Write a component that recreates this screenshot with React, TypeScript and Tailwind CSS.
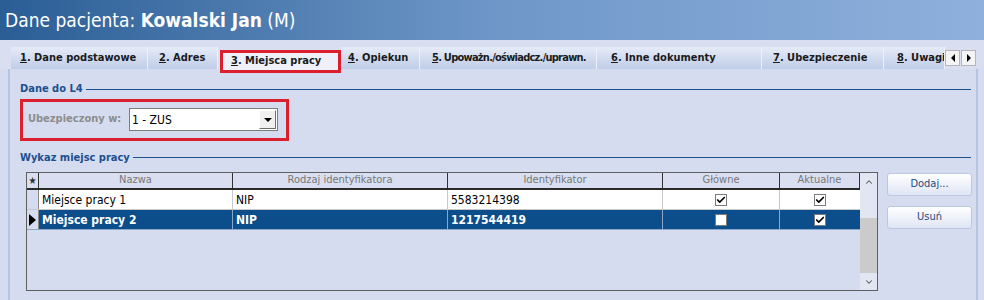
import { Check, ChevronUp, ChevronDown } from "lucide-react";

const tabs = [
  { n: "1", t: ". Dane podstawowe", cls: "w-[137px] pl-[9px]" },
  { n: "2", t: ". Adres", cls: "w-[70px] pl-[11px]" },
];
const tabsRight = [
  { n: "4", t: ". Opiekun", cls: "w-[79px] pl-[7px]" },
  { n: "5", t: ". Upoważn./oświadcz./uprawn.", cls: "w-[177px] pl-[12px] tracking-[-0.75px]" },
  { n: "6", t: ". Inne dokumenty", cls: "w-[165px] pl-[14px]" },
  { n: "7", t: ". Ubezpieczenie", cls: "w-[122px] pl-[11px]" },
  { n: "8", t: ". Uwagi", cls: "w-[61px] pl-[13px]" },
];

function Tab({ n, t, cls }: { n: string; t: string; cls: string }) {
  return (
    <div
      className={`${cls} shrink-0 h-[22px] flex items-center overflow-hidden whitespace-nowrap border-r border-[#eef1f9] bg-gradient-to-b from-[#e6ebf7] to-[#bfcde8] text-[11px] font-bold text-[#1b1b1b]`}
    >
      <span className="underline">{n}</span>
      {t}
    </div>
  );
}

function Box({ checked }: { checked: boolean }) {
  return (
    <div className="w-[12px] h-[12px] bg-white border border-[#7a7a7a] flex items-center justify-center">
      {checked && <Check size={10} strokeWidth={4} className="text-black" />}
    </div>
  );
}

function GroupTitle({ text }: { text: string }) {
  return (
    <div className="flex items-center gap-[3px] pr-[5px]">
      <span className="text-[11px] font-bold text-[#1c4f8d] whitespace-nowrap">{text}</span>
      <div className="flex-1 h-px bg-[#1c4f8d]" />
    </div>
  );
}

export default function App() {
  return (
    <div className="w-[984px] h-[300px] overflow-hidden bg-[#d5dcef] font-['DejaVu_Sans_Condensed','Liberation_Sans',sans-serif]">
      {/* header */}
      <div className="h-[40px] bg-gradient-to-r from-[#2a5e95] via-[#6e97c8] to-[#8fb0dc] flex items-center pl-[5px] text-white text-[19px]">
        <span>
          Dane pacjenta: <b>Kowalski Jan</b> (M)
        </span>
      </div>

      {/* tabs */}
      <div className="h-[29px] pt-[7px] pl-[11px] flex items-start bg-[#d9dff1]">
        {tabs.map((x) => (
          <Tab key={x.n} {...x} />
        ))}
        <div className="w-[2px] shrink-0" />
        <div className="relative z-10 shrink-0 mt-[3px] w-[121px] h-[23px] border-[3px] border-[#dc1f2d] bg-[#eef1f9] flex items-center pl-[8px] text-[11px] font-bold text-[#1b1b1b]">
          <span className="underline">3</span>. Miejsca pracy
        </div>
        {tabsRight.map((x) => (
          <Tab key={x.n} {...x} />
        ))}
        <div className="flex gap-[1px] mt-[3px] shrink-0">
          <div className="w-[15px] h-[16px] bg-[#f4f4f4] border border-[#b5b5b5] flex items-center justify-center">
            <div className="w-0 h-0 border-y-[4px] border-y-transparent border-r-[4px] border-r-black" />
          </div>
          <div className="w-[15px] h-[16px] bg-[#f4f4f4] border border-[#b5b5b5] flex items-center justify-center">
            <div className="w-0 h-0 border-y-[4px] border-y-transparent border-l-[4px] border-l-black" />
          </div>
        </div>
      </div>

      {/* panel */}
      <div className="ml-[8px] w-[970px] h-[231px] border-l-2 border-r-2 border-[#b4c2e4] pl-[10px] pt-[12px]">
        <GroupTitle text="Dane do L4" />

        <div className="mt-[1px] w-[269px] h-[42px] border-[3px] border-[#dc1f2d] flex items-center pl-[5px]">
          <span className="text-[11px] font-bold text-[#8c8c8c] w-[101px]">Ubezpieczony w:</span>
          <div className="w-[149px] h-[23px] bg-white border border-[#7c7c7c] flex items-center pl-[2px] pr-[1px]">
            <span className="flex-1 text-[12px] text-black">1 - ZUS</span>
            <div className="w-[17px] h-[19px] bg-[#f0f0f0] border-r border-b border-[#6d6d6d] border-l border-t border-l-white border-t-white flex items-center justify-center">
              <div className="w-0 h-0 border-x-[4px] border-x-transparent border-t-[4px] border-t-black" />
            </div>
          </div>
        </div>

        <div className="mt-[9px]">
          <GroupTitle text="Wykaz miejsc pracy" />
        </div>

        <div className="mt-[6px] flex items-start pl-[6px]">
          {/* grid */}
          <div className="w-[852px] h-[119px] border border-[#5f5f5f] flex">
            <div className="flex-1 flex flex-col text-[12px]">
              <div className="h-[17px] flex border-b-2 border-[#2a2a2a] bg-[#d9dff1] text-[11px] text-[#777]">
                <div className="w-[12px] border-r border-[#333] flex items-center justify-center text-[10px] text-[#333]">★</div>
                <div className="w-[194px] border-r border-[#333] flex items-center justify-center">Nazwa</div>
                <div className="w-[215px] border-r border-[#333] flex items-center justify-center">Rodzaj identyfikatora</div>
                <div className="w-[215px] border-r border-[#333] flex items-center justify-center">Identyfikator</div>
                <div className="w-[117px] border-r border-[#333] flex items-center justify-center">Główne</div>
                <div className="w-[80px] border-r border-[#333] flex items-center justify-center">Aktualne</div>
              </div>
              <div className="h-[20px] flex bg-white text-black border-b border-[#c9c9c9]">
                <div className="w-[12px] bg-[#d5dcef] border-r border-[#888]" />
                <div className="w-[194px] border-r border-[#c9c9c9] flex items-center pl-[3px]">Miejsce pracy 1</div>
                <div className="w-[215px] border-r border-[#c9c9c9] flex items-center pl-[3px]">NIP</div>
                <div className="w-[215px] border-r border-[#c9c9c9] flex items-center pl-[3px]">5583214398</div>
                <div className="w-[117px] border-r border-[#c9c9c9] flex items-center justify-center">
                  <Box checked />
                </div>
                <div className="w-[80px] flex items-center justify-center">
                  <Box checked />
                </div>
              </div>
              <div className="h-[20px] flex bg-[#0b4e8b] text-white font-bold border-b border-[#8aa6c8]">
                <div className="w-[12px] bg-[#d5dcef] border-r border-[#888] flex items-center justify-center">
                  <div className="w-0 h-0 border-y-[6px] border-y-transparent border-l-[7px] border-l-black" />
                </div>
                <div className="w-[194px] border-r border-[#8aa6c8] flex items-center pl-[3px]">Miejsce pracy 2</div>
                <div className="w-[215px] border-r border-[#8aa6c8] flex items-center pl-[3px]">NIP</div>
                <div className="w-[215px] border-r border-[#8aa6c8] flex items-center pl-[3px]">1217544419</div>
                <div className="w-[117px] border-r border-[#8aa6c8] flex items-center justify-center">
                  <Box checked={false} />
                </div>
                <div className="w-[80px] flex items-center justify-center">
                  <Box checked />
                </div>
              </div>
            </div>
            {/* scrollbar */}
            <div className="w-[17px] flex flex-col bg-[#e2e6f3]">
              <div className="h-[17px] flex items-center justify-center text-[#555]">
                <ChevronUp size={10} strokeWidth={2.5} />
              </div>
              <div className="h-[28px]" />
              <div className="h-[55px] bg-[#cbcbcb]" />
              <div className="flex-1 flex items-center justify-center text-[#555]">
                <ChevronDown size={10} strokeWidth={2.5} />
              </div>
            </div>
          </div>

          {/* buttons */}
          <div className="ml-[9px] flex flex-col gap-[10px] mt-[1px]">
            <button className="w-[85px] h-[23px] rounded-[3px] border border-[#bcc7e2] bg-gradient-to-b from-white to-[#dfe5f5] text-[11px] text-[#27497a]">
              Dodaj...
            </button>
            <button className="w-[85px] h-[23px] rounded-[3px] border border-[#bcc7e2] bg-gradient-to-b from-white to-[#dfe5f5] text-[11px] text-[#27497a]">
              Usuń
            </button>
          </div>
        </div>
      </div>
    </div>
  );
}
